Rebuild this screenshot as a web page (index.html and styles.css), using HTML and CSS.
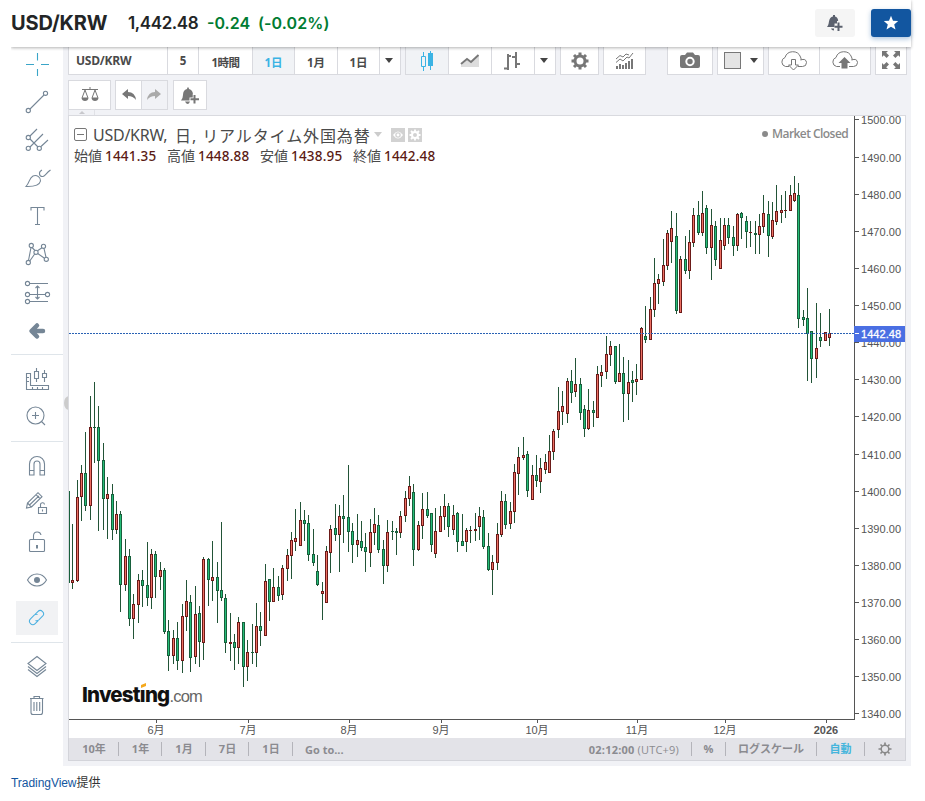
FILE: index.html
```html
<!DOCTYPE html>
<html lang="ja">
<head>
<meta charset="utf-8">
<title>USD/KRW</title>
<link rel="stylesheet" href="styles.css">
</head>
<body>
<header class="quote">
  <h1 class="quote-name">USD/KRW</h1>
  <span class="quote-price">1,442.48</span>
  <span class="quote-change">-0.24</span>
  <span class="quote-pct">(-0.02%)</span>
  <button class="hbtn hbtn-alert"><svg width="24" height="24" viewBox="0 0 24 24"><path d="M4 16 C6 14 5.500 11 6.500 8.500 C7.200 6.500 9 5.800 10 5.500 V4 H12 V5.500 C14 6 15 7.500 15.200 10 H14 V12.500 H11.500 V16Z M8 17.500 H11 V19.500 Q8.500 19.500 8 17.500Z" fill="#5b616e"/><path d="M15.500 11.500 V20 M11.500 15.700 H19.500" stroke="#5b616e" stroke-width="2"/></svg></button>
  <button class="hbtn hbtn-star"><svg width="16" height="16" viewBox="0 0 16 16"><path d="M8 .8 L10 5.700 L15.200 6.100 L11.200 9.500 L12.500 14.600 L8 11.800 L3.500 14.600 L4.800 9.500 L.8 6.100 L6 5.700Z" fill="#fff"/></svg></button>
</header>

<main class="widget">
  <nav class="tools">
    <div class="tool active-line"><svg viewBox="-18 -18 36 36"><path d="M-11 -.5 H-3 M4 -.5 H12 M.5 -12 V-4.500 M.5 4 V11"/></svg></div>
    <div class="tool"><svg viewBox="-18 -18 36 36"><circle cx="-8.700" cy="7.500" r="2.100"/><circle cx="8.500" cy="-9.700" r="2.100"/><path d="M-7 6 L7 -8"/></svg></div>
    <div class="tool"><svg viewBox="-18 -18 36 36"><circle cx="-8.700" cy="-3.500" r="2.100"/><circle cx="-8.700" cy="7.300" r="2.100"/><circle cx="2.300" cy="7.300" r="2.100"/><path d="M-7 -5 L0 -12 M-7 6 L6 -7 M4 5.500 L11 -1 M-7 -2 L1 6"/></svg></div>
    <div class="tool"><svg viewBox="-18 -18 36 36"><path d="M-11 7.500 C-7 3 -8 -1 -4 -3 C0 -4.500 4 -1.500 3.500 2 C2.500 6.500 -2 7.800 -11 7.500Z M5 -9 C1 -7 2 -2 6 -2.500 C8.500 -3 9 -6 13.500 -9"/></svg></div>
    <div class="tool"><svg viewBox="-18 -18 36 36"><path d="M-6 -6.500 V-9.500 H7 V-6.500 M.5 -9.500 V7.500 M-2 7.500 H3"/></svg></div>
    <div class="tool"><svg viewBox="-18 -18 36 36"><circle cx="-5.700" cy="-9.500" r="2.100"/><circle cx="6.500" cy="-8.700" r="2.100"/><circle cx="-8.700" cy="7.500" r="2.100"/><circle cx="9.300" cy="4.300" r="2.100"/><circle cx="-1" cy="-2.700" r="2.100"/><path d="M-6 -7.500 L-8.500 5.500 M-5 -7.500 L-2 -4.500 M.5 -4.200 L5 -7.200 M7 -6.600 L9 2.300 M-7.200 6 L-2.300 -1 M.7 -1.500 L7.500 3.300"/></svg></div>
    <div class="tool"><svg viewBox="-18 -18 36 36"><circle cx="-9.500" cy="-9.500" r="2.100"/><circle cx="-9.500" cy="1.500" r="2.100"/><circle cx="10.500" cy="1.500" r="2.100"/><circle cx="-9.500" cy="8.500" r="2.100"/><path d="M-7.500 -9.500 H11 M-7.500 1.500 H8.500 M-7.500 8.500 H11 M.5 -6.500 V5.500 M-1.500 -5 L.5 -7 L2.500 -5 M-1.500 4 L.5 6 L2.500 4"/></svg></div>
    <div class="tool"><svg viewBox="-18 -18 36 36"><path d="M0 -5.500 L-5.500 0 L0 5.500 M-4 0 H6" stroke-width="4.500" stroke-linecap="round" stroke-linejoin="round"/></svg></div>
    <hr class="sep">
    <div class="tool"><svg viewBox="-18 -18 36 36"><path d="M-10.500 -6.500 V9.500 H11.500 V5.500 H-6.500 V-6.500Z M-10 -2.500 H-8 M-10 1.500 H-8 M-4.500 9 V7 M.5 9 V7 M5.500 9 V7 M-2.500 -8.500 H1.500 V-1.500 H-2.500Z M-.5 -12 V-8.500 M-.5 -1.500 V2 M5.500 -6.500 H9.500 V-2.500 H5.500Z M7.500 -10 V-6.500 M7.500 -2.500 V2"/></svg></div>
    <div class="tool"><svg viewBox="-18 -18 36 36"><circle cx="-1.500" cy="-2.500" r="8.500"/><path d="M4.500 3.500 L8 7 M-5 -2.500 H2 M-1.500 -6 V1"/></svg></div>
    <hr class="sep">
    <div class="tool"><svg viewBox="-18 -18 36 36"><path d="M-7.500 8 V-3 A7.500 7.500 0 0 1 7.500 -3 V8 H3 V-3 A3 3 0 0 0 -3 -3 V8Z M-7.500 3.500 H-3 M3 3.500 H7.500"/></svg></div>
    <div class="tool"><svg viewBox="-18 -18 36 36"><path d="M-10.500 3 L-9.500 -2 L1 -12.300 L5 -8.300 L-5.500 2 L-10.500 3Z M-9.500 -2 L-5.500 2 M-1 -10.300 L3 -6.300 M-7.500 0 L2 -9.200 M1.500 2.500 H9.500 V8.500 H1.500Z M5.500 4.500 V6.500 M3.500 2.500 V0 A2 2 0 0 1 7.500 -.5"/></svg></div>
    <div class="tool"><svg viewBox="-18 -18 36 36"><path d="M-6.500 -3.500 H6.500 Q7.500 -3.500 7.500 -2.500 V7.500 Q7.500 8.500 6.500 8.500 H-6.500 Q-7.500 8.500 -7.500 7.500 V-2.500 Q-7.500 -3.500 -6.500 -3.500Z M-3.500 -3.500 V-7.500 A3.800 3.800 0 0 1 4 -8"/><path d="M0 2 V5.500" stroke-width="2"/></svg></div>
    <div class="tool"><svg viewBox="-18 -18 36 36"><path d="M-9.500 -1 C-5 -9 5 -9 9.500 -1 C5 7 -5 7 -9.500 -1Z"/><circle cx="0" cy="-1" r="3" class="solid"/></svg></div>
    <div class="tool selected"><svg viewBox="-18 -18 36 36"><g transform="translate(-.5 -.5) rotate(-45)"><path d="M-1 3.500 H-5.500 A3.500 3.500 0 0 1 -5.500 -3.500 H0 A3.500 3.500 0 0 1 3 -1.500 M1 -3.500 H5.500 A3.500 3.500 0 0 1 5.500 3.500 H0 A3.500 3.500 0 0 1 -3 1.500" /></g></svg></div>
    <hr class="sep">
    <div class="tool"><svg viewBox="-18 -18 36 36"><path d="M0 -11.500 L9 -4.500 L0 2.500 L-9 -4.500Z M-9 -1.500 L0 5.500 L9 -1.500 M-9 1.500 L0 8.500 L9 1.500"/></svg></div>
    <div class="tool"><svg viewBox="-18 -18 36 36"><path d="M-7 -7.500 H6.500 M-3 -7.500 V-9.500 H2.500 V-7.500 M-6 -7.500 V6.500 Q-6 8.500 -4 8.500 H3.500 Q5.500 8.500 5.500 6.500 V-7.500 M-3 -4 V5 M-.2 -4 V5 M2.700 -4 V5"/></svg></div>
  </nav>

  <div class="gutter"><i class="handle"></i></div>

  <section class="board">
    <div class="bar bar-top">
      <div class="group">
        <span class="cell c-symbol">USD/KRW</span><span class="cell c-five">5</span><span class="cell c-hour">1時間</span><span class="cell c-day on">1日</span><span class="cell c-month">1月</span><span class="cell c-one">1日</span><span class="cell c-drop"><i class="caret"></i></span>
      </div>
      <div class="group">
        <span class="cell c-icon on"><svg width="16" height="24" viewBox="0 0 16 24"><path d="M4.500 3 V7 M4.500 18 V22 M2.500 7.500 H6.500 V17.500 H2.500Z M11.500 2 V21" fill="none" stroke="#3bb3e4"/><path d="M9 4 H14 V17 H9Z" fill="#3bb3e4"/></svg></span>
        <span class="cell c-icon"><svg width="20" height="16" viewBox="0 0 20 16"><path d="M1 12 L7 7 L11 9 L19 2 V14 H1Z" fill="#ddd"/><path d="M1 11 L7 6 L11 9 L18.500 2" fill="none" stroke="#777" stroke-width="1.900"/></svg></span>
        <span class="cell c-icon"><svg width="20" height="20" viewBox="0 0 20 20"><path d="M5 3 V19 M1 17.500 H5 M5 5 H8 M13 1 V17 M9 6 H13 M13 13 H17" fill="none" stroke="#777" stroke-width="2"/></svg></span>
        <span class="cell c-drop"><i class="caret"></i></span>
      </div>
      <div class="group"><span class="cell c-gear"><svg width="18" height="18" viewBox="-9 -9 18 18"><circle r="5" fill="none" stroke="#777" stroke-width="3"/><path d="M0 -8.500 V-5 M0 5 V8.500 M-8.500 0 H-5 M5 0 H8.500 M-6 -6 L-4 -4 M4 4 L6 6 M-6 6 L-4 4 M4 -4 L6 -6" stroke="#777" stroke-width="3"/></svg></span></div>
      <div class="group"><span class="cell c-ind"><svg width="18" height="18" viewBox="0 0 18 18"><path d="M1 14 V17 M4 12 V17 M7 13 V17 M10 11 V17 M13 9 V17 M16 7 V17" stroke="#777" stroke-width="2"/><path d="M0 10.500 L4 7 L7 9 L11 5 L13 6 L17 1 M0 7 L4 3.500 L7 5 L10 2 L13 3" fill="none" stroke="#777"/></svg></span></div>
      <div class="group g-photo"><span class="cell c-photo"><svg width="20" height="18" viewBox="0 0 20 18"><path d="M2 3 H5 L7 .5 H13 L15 3 H18 Q20 3 20 5 V14 Q20 16 18 16 H2 Q0 16 0 14 V5 Q0 3 2 3Z" fill="#777"/><circle cx="10" cy="9.500" r="3.700" fill="none" stroke="#fff" stroke-width="2"/></svg></span></div>
      <div class="group"><span class="cell c-theme"><i class="swatch"></i><i class="caret"></i></span></div>
      <div class="group">
        <span class="cell c-cloud"><svg width="28" height="20" viewBox="0 0 28 20"><path d="M9 15.500 H5.500 A4.700 4.700 0 0 1 5 6.500 A8.200 8.200 0 0 1 20.500 6 Q22 9 20.500 9 Q26 7 26.500 11.500 Q26.500 15.500 22.500 15.500 H18" fill="none" stroke="#777"/><path d="M11.500 8.500 H15.500 V14 H18.500 L13.500 19 L8.500 14 H11.500Z" fill="#fff" stroke="#777"/></svg></span>
        <span class="cell c-cloud"><svg width="28" height="20" viewBox="0 0 28 20"><path d="M9 15.500 H5.500 A4.700 4.700 0 0 1 5 6.500 A8.200 8.200 0 0 1 20.500 6 Q22 9 20.500 9 Q26 7 26.500 11.500 Q26.500 15.500 22.500 15.500 H18" fill="none" stroke="#777"/><path d="M10.500 17.500 V12 H7.500 L13.500 6 L19.500 12 H16.500 V17.500Z" fill="#777"/></svg></span>
      </div>
      <div class="group"><span class="cell c-full"><svg width="18" height="18" viewBox="0 0 18 18"><path d="M0 0 H6 L4.200 1.800 L7 4.600 L4.600 7 L1.800 4.200 L0 6Z M18 0 V6 L16.200 4.200 L13.400 7 L11 4.600 L13.800 1.800 L12 0Z M0 18 V12 L1.800 13.800 L4.600 11 L7 13.400 L4.200 16.200 L6 18Z M18 18 H12 L13.800 16.200 L11 13.400 L13.400 11 L16.200 13.800 L18 12Z" fill="#777"/></svg></span></div>
    </div>

    <div class="bar bar-second">
      <div class="group"><span class="cell s-scale"><svg width="18" height="16" viewBox="0 0 18 16"><path d="M9 0 V2 M1 2.500 H17 M4 3 L1 11 H7Z M14 3 L11 11 H17Z" fill="none" stroke="#777"/><path d="M.5 11 H7.500 Q7 14 4 14 Q1 14 .5 11Z M10.500 11 H17.500 Q17 14 14 14 Q11 14 10.500 11Z" fill="#777"/></svg></span></div>
      <div class="group"><span class="cell s-arrow"><svg width="14" height="12" viewBox="0 0 14 12"><path d="M6 0 V3 Q13 3 14 11 Q11 7 6 7 V10 L0 5Z" fill="#777"/></svg></span><span class="cell s-arrow off"><svg width="14" height="12" viewBox="0 0 14 12"><path d="M8 0 V3 Q1 3 0 11 Q3 7 8 7 V10 L14 5Z" fill="#aaa"/></svg></span></div>
      <div class="group"><span class="cell s-bell"><svg width="20" height="18" viewBox="0 0 20 18"><path d="M8 0 Q9 1 9 2 Q13 3 13 8 Q13 11 14.500 13.500 H1 Q3 11 3 8 Q3 3 7 2 Q7 1 8 0Z M5 14.500 H10 Q9 17 7.500 17 Q6 16.500 5 14.500Z" fill="#777"/><path d="M14.500 7 V17 M9.500 12.200 H19.500" stroke="#fff" stroke-width="3.500"/><path d="M14.500 8 V16.500 M10.500 12.200 H19" stroke="#777" stroke-width="2"/></svg></span></div>
    </div>
    <div class="tab"><i></i></div>

    <div class="pane">
      <svg id="chart" class="chart" width="836" height="622" viewBox="69 116 836 622"></svg>
      <div class="legend">
        <div class="legend-title"><i class="minus"></i><span class="lt-name">USD/KRW,</span><span class="lt-desc">日,&nbsp;リアルタイム外国為替</span><i class="caret pale"></i>
          <i class="chip chip-eye"><svg width="14" height="14" viewBox="0 0 14 14"><path d="M2 7 Q7 0 12 7 Q7 14 2 7Z" fill="#fff"/><circle cx="7" cy="7" r="2.100" fill="none" stroke="#d2d2d2" stroke-width="1.300"/></svg></i>
          <i class="chip"><svg width="14" height="14" viewBox="-7 -7 14 14"><circle r="3" fill="none" stroke="#fff" stroke-width="2"/><path d="M0 -5.500 V-3 M0 3 V5.500 M-5.500 0 H-3 M3 0 H5.500 M-4 -4 L-2 -2 M2 2 L4 4 M-4 4 L-2 2 M2 -2 L4 -4" stroke="#fff" stroke-width="1.800"/></svg></i>
        </div>
        <div class="legend-values"><span>始値</span><b>1441.35</b><span>高値</span><b>1448.88</b><span>安値</span><b>1438.95</b><span>終値</span><b>1442.48</b></div>
      </div>
      <div class="market"><i></i>Market Closed</div>
      <div class="brand"><b>Invest<span class="dotless">ı<i></i></span>ng</b><span>.com</span></div>
    </div>

    <footer class="ranges">
      <span class="r r1">10年</span><span class="r r2">1年</span><span class="r r3">1月</span><span class="r r4">7日</span><span class="r r5">1日</span><span class="goto">Go to...</span>
      <span class="clock"><b>02:12:00</b> (UTC+9)</span><span class="r q1">%</span><span class="r q2">ログスケール</span><span class="r q3">自動</span>
      <span class="cog"><svg width="14" height="14" viewBox="-7 -7 14 14"><circle r="3.800" fill="none" stroke="#888" stroke-width="1.500"/><path d="M0 -6.500 V-4 M0 4 V6.500 M-6.500 0 H-4 M4 0 H6.500 M-4.500 -4.500 L-3 -3 M3 3 L4.500 4.500 M-4.500 4.500 L-3 3 M3 -3 L4.500 -4.500" stroke="#888" stroke-width="1.700"/></svg></span>
    </footer>
  </section>
</main>
<p class="credit"><a>TradingView</a>提供</p>
<script src="chart.js"></script>
</body>
</html>
```
FILE: styles.css
```css
* { box-sizing: border-box; }
body { margin: 0; background: #fff; color: #232526; font-family: "Liberation Sans", "Noto Sans CJK JP", sans-serif; width: 925px; }
button { border: 0; padding: 0; }
.quote { display: flex; align-items: center; height: 47px; width: 900px; margin-left: 11px; position: relative; z-index: 2; background: #fff; box-shadow: 0 1px 3px rgba(0,0,0,.3); clip-path: inset(0 -14px -8px 0); font-family: Inter, sans-serif; font-weight: 600; font-size: 17px; line-height: 24px; padding-bottom: 1px; }
.quote-name { margin: 0; width: 117px; font-size: 20px; font-weight: 700; letter-spacing: -.15px; }
.quote-price { width: 79px; letter-spacing: -.4px; }
.quote-change { width: 51px; color: #007c32; font-size: 16px; }
.quote-pct { color: #007c32; font-size: 16px; letter-spacing: .1px; }
.hbtn { display: flex; align-items: center; justify-content: center; width: 40px; height: 28px; border-radius: 3px; }
.hbtn-alert { margin-left: auto; background: #f5f5f5; }
.hbtn-star { margin-left: 16px; background: #1256a0; box-shadow: 0 2px 5px rgba(18,86,160,.35); }

.widget { display: flex; width: 900px; height: 719px; margin-left: 11px; background: #f1f2f6; }
.tools { width: 52px; height: 719px; background: #fff; }
.tool { height: 38px; display: flex; justify-content: center; align-items: center; position: relative; top: -1px; }
.tool svg { width: 36px; height: 36px; fill: none; stroke: #758696; stroke-width: 1.100; overflow: visible; }
.tool .solid { fill: #758696; stroke: none; }
.active-line svg { stroke: #3aa5c8; }
.selected svg { stroke: #4bb0e0; background: #f1f2f4; width: 42px; height: 34px; position: relative; top: -1px; }
.sep { height: 1px; margin: 3px 0 7px; border: 0; background: #dfe5ea; }
.gutter { width: 5px; position: relative; overflow: hidden; }
.handle { position: absolute; left: 1px; top: 349px; width: 10px; height: 14px; border-radius: 50%; background: #ccc; }

.board { width: 838px; display: flex; flex-direction: column; }
.bar { display: flex; font-family: "Open Sans", "Noto Sans CJK JP", sans-serif; font-size: 12px; font-weight: 700; color: #4a4a4a; }
.bar-top { height: 28px; width: 839px; }
.bar-top .group { border-top: 0; }
.group { display: flex; border: 1px solid #d9dadf; background: #fff; margin-right: 4px; }
.cell { display: flex; align-items: center; justify-content: center; border-left: 1px solid #d9dadf; }
.cell:first-child { border-left: 0; }
.on { background: #f1f3f6; color: #3bb3e4; }
.caret { width: 0; height: 0; border: 4px solid transparent; border-top: 5px solid #444; border-bottom: 0; }
.c-symbol { width: 98px; justify-content: flex-start; padding-left: 7px; letter-spacing: -.25px; }
.c-five { width: 31px; }
.c-hour { width: 54px; letter-spacing: -.6px; }
.c-day { width: 42px; }
.c-month { width: 43px; }
.c-one { width: 42px; }
.c-drop { width: 21px; padding-right: 2px; }
.c-hour, .c-day, .c-month, .c-one { padding-top: 3px; font-size: 11.500px; }
.c-five { padding-bottom: 1px; font-size: 11.500px; }
.c-icon { width: 43px; }
.c-icon.on { width: 42px; }
.c-gear { width: 37px; }
.c-ind { width: 41px; }
.g-photo { margin-left: 17px; }
.c-photo { width: 44px; }
.c-theme { width: 45px; gap: 9px; }
.swatch { width: 17px; height: 17px; border: 1px solid #777; background: #e4e4e4; }
.c-cloud { width: 51px; }
.c-cloud:first-child { width: 50px; }
.c-full { width: 30px; padding-bottom: 2px; }
.bar-top .cell svg, .bar-top .swatch { display: block; }
.bar-second { margin-top: 5px; height: 30px; }
.s-scale { width: 41px; }
.s-arrow { width: 25px; }
.s-arrow.off { width: 26px; padding-right: 2px; }
.off { background: #f1f2f6; }
.s-bell { width: 32px; padding-top: 2px; }
.bar-second .group { margin-right: 5px; }
.bar-second .group:first-child { margin-right: 4px; }
.tab { width: 27px; height: 5px; border: 1px solid #e0e1e6; border-width: 0 1px; display: flex; justify-content: center; padding-top: 1px; }
.tab i { width: 0; height: 0; border: 3px solid transparent; border-top: 0; border-bottom-color: #c8c8cc; }

.pane { position: relative; height: 623px; border: 1px solid #d9dadf; border-bottom: 0; background: #fff; }
.chart { display: block; font-family: "Liberation Sans", "Noto Sans CJK JP", sans-serif; font-size: 11px; fill: #555; }
.legend { position: absolute; left: 5px; top: 8px; color: #4a4a4a; font-family: "Noto Sans", "Noto Sans CJK JP", sans-serif; }
.legend-title { display: flex; align-items: center; height: 21px; font-size: 16px; white-space: nowrap; }
.minus { width: 13px; height: 13px; border: 1px solid #777; border-radius: 2px; display: flex; align-items: center; padding: 0 2px; }
.minus::before { content: ""; height: 1px; width: 100%; background: #777; }
.lt-name { margin-left: 6px; width: 82px; letter-spacing: -.25px; }
.lt-desc { letter-spacing: .9px; width: 197px; }
.pale { border-top-color: #ccc; margin-right: 9px; margin-left: 2px; }
.chip { width: 14px; height: 14px; background: #d2d2d2; margin-right: 3px; display: flex; }
.legend-values { display: flex; height: 22px; line-height: 22px; font-size: 14px; }
.legend-values b { color: #5b1a13; font-weight: 500; font-size: 13.500px; letter-spacing: .2px; width: 62px; margin-left: 3px; }
.market { position: absolute; left: 693px; top: 9px; display: flex; align-items: center; font: 12px/18px "Open Sans", sans-serif; color: #8a8a8a; font-weight: 600; letter-spacing: -.55px; white-space: nowrap; }
.market i { width: 6px; height: 6px; border-radius: 50%; background: #8a8a8a; margin-right: 4px; }
.brand { position: absolute; left: 13px; top: 566px; height: 26px; display: flex; align-items: baseline; line-height: 26px; color: #111; }
.brand b { font-family: Inter, sans-serif; font-weight: 800; font-size: 20.500px; letter-spacing: -.8px; }
.brand > span { font-size: 16.500px; color: #666; letter-spacing: -.8px; }
.dotless { position: relative; }
.dotless i { position: absolute; left: 1px; top: 2px; width: 5px; height: 3px; background: #f5a81c; transform: skewY(-20deg); }

.ranges { height: 23px; background: #e3e3e8; border: 1px solid #d3d4da; border-top: 0; display: flex; align-items: center; font-family: "Open Sans", "Noto Sans CJK JP", sans-serif; font-size: 11px; font-weight: 700; color: #8b8b90; white-space: nowrap; }
.r { height: 14px; line-height: 13px; border-right: 1px solid #b4b4ba; text-align: center; }
.r1 { width: 50px; padding-left: 1px; }
.r2 { width: 43px; padding-left: 1px; }
.r3 { width: 44px; padding-left: 1px; }
.r4 { width: 43px; padding-left: 1px; }
.r5 { width: 44px; padding-left: 1px; }
.goto { margin-left: 12px; }
.clock { margin-left: auto; font-weight: 400; font-size: 11px; padding-right: 12px; letter-spacing: .2px; }
.clock + .r { border-left: 1px solid #b4b4ba; }
.q1 { width: 35px; }
.q2 { width: 91px; }
.q3 { width: 48px; color: #45b5dc; }
.cog { width: 40px; display: flex; justify-content: center; }
.credit { margin: 8px 0 0 11px; font-size: 12px; line-height: 18px; color: #333; letter-spacing: -.05px; }
.credit a { color: #1256a0; }
```
FILE: chart.js
```js
// Candle segments: origin of the segment in pixels, then rows of
// [centre, high, body top, body bottom, low, rising] in thirds of a pixel.
const segments = [
  { x: 66, y: 370, rows: [
    [7,363,363,638,638,0],[19,462,630,638,658,1],[34,330,381,632,636,1],[46,285,310,380,452,1],[58,186,310,407,422,0],
    [73,78,171,407,449,1],[85,36,171,173,278,0],[97,108,171,272,482,0],[112,219,270,386,479,0],[124,321,373,386,506,1],
    [139,342,373,480,509,0],[151,393,432,480,491,1],[163,423,432,645,725,0],[178,507,558,645,662,1],[190,537,558,746,767,0],
    [202,672,702,746,806,1],[217,612,630,704,758,1],[229,600,630,647,710,0],[244,516,645,683,707,0],[256,537,552,683,716,1],
    [268,543,552,620,683,0],[283,576,600,620,659,1],[295,594,600,785,791,0],[307,750,783,857,902,0],[322,780,804,857,881,1],
    [334,756,804,872,899,0],[349,702,738,872,908,1],[361,630,693,740,782,1],[373,675,696,863,905,0],[388,648,732,860,881,1],
    [400,708,729,815,890,0],[412,561,567,818,869,1],[427,564,567,629,707,0],[439,513,621,632,692,1],[454,576,621,662,758,0],
    [466,456,660,684,692,0],[478,672,684,818,848,0],[493,729,816,821,872,1],[505,792,816,833,899,0],[517,741,756,833,881,1],
    [532,756,756,890,950,0],[544,810,846,890,932,1],[559,762,847,850,881,0],[571,699,768,848,890,1],[583,726,768,782,827,0]
  ] },
  { x: 240, y: 450, rows: [
    [76,342,393,557,557,1],[88,387,387,455,512,0],[100,354,411,455,455,1],[115,378,411,437,452,0],[127,345,354,434,449,1],
    [142,297,315,356,392,1],[154,246,270,317,386,1],[166,177,264,275,302,1],[181,156,210,287,287,1],[193,180,210,221,272,0],
    [205,195,219,314,332,0],[220,237,312,338,347,0],[232,315,363,404,407,0],[247,396,423,431,509,1],[259,288,303,458,458,1],
    [271,225,237,308,368,1],[286,162,234,254,272,0],[298,165,198,254,365,1],[310,135,198,206,278,0],[325,45,201,245,305,0],
    [337,219,243,284,338,0],[352,192,270,284,320,1],[364,213,273,293,302,0],[376,249,291,305,365,0],[391,207,246,308,350,1],
    [403,174,222,248,284,1],[415,195,225,299,308,0],[430,270,297,347,401,0],[442,210,246,347,365,1],[457,213,243,245,269,0],
    [469,234,243,248,314,0],[481,183,198,248,263,1],[496,123,144,197,215,1],[508,78,108,147,167,1],[520,102,126,299,347,0],
    [535,213,225,299,302,1],[547,129,177,227,266,1],[562,126,177,197,203,0],[574,189,189,284,305,0],[586,174,243,311,323,1]
  ] },
  { x: 400, y: 400, rows: [
    [121,318,348,395,395,1],[133,282,318,350,389,1],[145,309,318,380,410,0],[160,315,345,389,404,1],[172,336,339,425,455,0],
    [187,342,423,437,437,0],[199,384,390,425,455,1],[211,378,390,392,428,1],[226,339,387,392,422,1],[238,321,348,380,419,1],
    [250,330,351,440,446,0],[265,399,438,509,512,0],[277,465,486,509,584,1],[292,369,402,488,509,1],[304,273,303,404,410,1],
    [316,282,303,374,386,0],[331,306,333,371,386,1],[343,192,216,335,368,1],[355,141,171,221,284,1],[370,111,165,173,179,1],
    [382,153,162,272,290,0],[397,195,225,299,299,1],[409,165,225,242,260,0],[421,174,204,245,278,1],[436,162,186,209,221,1],
    [448,105,153,218,218,1],[460,87,93,155,179,1],[475,-39,33,89,113,1]
  ] },
  { x: 560, y: 170, rows: [
    [7,663,708,725,764,1],[22,624,633,731,758,1],[34,600,633,668,698,0],[46,564,642,665,680,1],[61,624,642,728,749,0],
    [73,705,717,776,800,0],[85,657,720,776,779,1],[100,693,720,728,770,0],[112,588,612,743,743,1],[124,585,606,617,650,1],
    [139,498,552,605,626,1],[151,513,528,554,587,1],[166,528,528,635,641,0],[178,522,609,635,635,1],[190,561,609,671,755,0],
    [205,570,636,671,749,1],[217,603,630,638,695,0],[229,582,627,635,674,1],[244,471,474,629,629,1],[256,408,498,509,518,0],
    [271,381,417,509,509,1],[283,264,339,419,440,1],[295,312,327,341,401,1],[310,207,285,335,347,1],[322,180,189,287,299,1],
    [334,123,174,215,278,1],[349,129,198,422,431,0],[361,258,267,428,428,1],[376,198,267,302,311,0],[388,180,216,302,326,1],
    [400,114,135,218,230,1],[415,93,135,188,194,0],[427,63,129,188,197,1],[439,105,114,233,251,0],[454,117,165,233,329,1],
    [466,153,168,269,287,0],[481,144,210,296,296,1],[493,144,165,227,239,1],[505,144,165,203,221,0]
  ] },
  { x: 700, y: 160, rows: [
    [100,198,231,257,287,0],[112,159,162,257,272,1],[124,156,159,173,236,0],[139,168,183,217,263,0],[151,183,216,218,260,1],
    [166,183,219,224,282,0],[178,162,198,224,282,1],[190,105,159,200,218,1],[205,123,162,227,290,0],[217,126,180,230,236,1],
    [229,75,153,185,194,1],[244,105,150,158,188,1],[256,93,150,152,173,1],[271,75,105,152,152,1],[283,48,99,122,125,1],
    [295,69,105,476,503,0],[310,450,471,479,497,0],[322,384,474,521,662,0],[334,513,513,596,668,0],[349,429,564,596,653,1],
    [361,459,531,542,560,0],[376,516,516,542,542,1],[388,447,519,533,557,1]
  ] }
];

const svg = document.getElementById('chart');
const out = [];
const rect = (x, y, w, h, fill) => out.push(`<rect x="${x}" y="${y}" width="${w}" height="${h}" fill="${fill}"/>`);
const label = (x, y, text, extra = '') => out.push(`<text x="${x}" y="${y}" ${extra}>${text}</text>`);

for (const s of segments) {
  for (const [cx, hi, top, bottom, lo, up] of s.rows) {
    const x = s.x + Math.floor(cx / 3);
    const py = v => s.y + Math.round(v / 3);
    const t = py(top);
    const h = Math.max(1, py(bottom) - t);
    rect(x, py(hi), 1, py(lo) - py(hi), '#225437');
    rect(x - 1, t, 3, h, up ? '#6b1a18' : '#17603c');
    if (h > 2) rect(x, t + 1, 1, h - 2, up ? '#ee7064' : '#25bd78');
  }
}

out.push('<path d="M69 333.500 H854" stroke="#2a62b4" stroke-dasharray="2 1" fill="none"/>');
rect(854, 116, 1, 604, '#555');
rect(69, 719, 786, 1, '#555');
for (let i = 0; i <= 16; i++) {
  const y = Math.round(119.4 + i * 37.125);
  rect(855, y, 4, 1, '#555');
  label(861, y + 5, (1500 - i * 10).toFixed(2), 'textLength="40"');
}
rect(854, 326, 51, 16, '#4a6fe3');
rect(855, 333, 4, 1, '#fff');
label(861, 338, '1442.48', 'fill="#fff" stroke="#fff" stroke-width=".3" textLength="40"');

const months = [[156, '6月'], [248, '7月'], [349, '8月'], [441, '9月'], [537, '10月'], [637, '11月'], [725, '12月']];
for (const [x, text] of months) {
  rect(x, 720, 1, 3, '#555');
  label(x, 734, text, 'text-anchor="middle"');
}
rect(826, 720, 1, 3, '#555');
label(826, 734, '2026', 'text-anchor="middle" font-weight="700"');
svg.innerHTML = out.join('');
```
